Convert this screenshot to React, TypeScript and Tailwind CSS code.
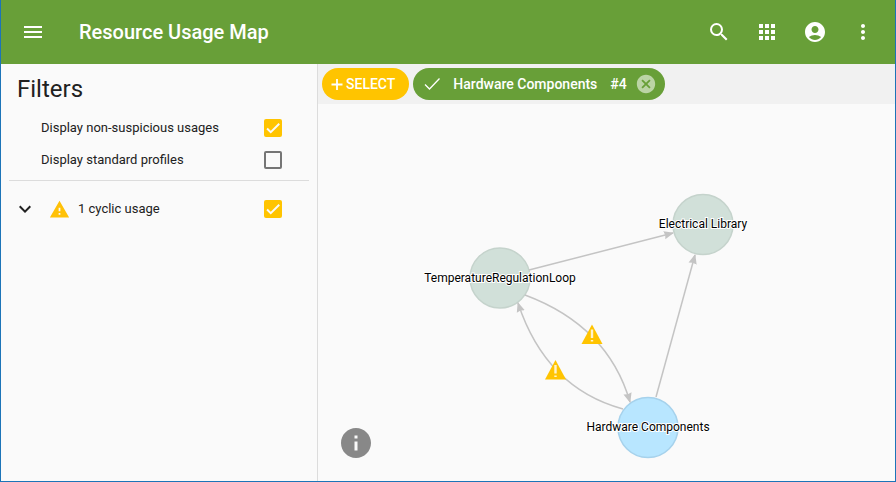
import { useState } from "react";
import {
  MdAccountCircle,
  MdApps,
  MdCancel,
  MdExpandMore,
  MdInfo,
  MdMenu,
  MdMoreVert,
  MdSearch,
  MdWarning,
} from "react-icons/md";

type GraphNode = {
  label: string;
  x: number;
  y: number;
  fill: string;
  stroke: string;
};

const nodes: GraphNode[] = [
  { label: "TemperatureRegulationLoop", x: 182, y: 174, fill: "#d1e0d9", stroke: "#c5d3cc" },
  { label: "Electrical Library", x: 385, y: 120.5, fill: "#d1e0d9", stroke: "#c5d3cc" },
  { label: "Hardware Components", x: 330, y: 323.5, fill: "#b8e6ff", stroke: "#a6d2ec" },
];

const edges = [
  "M211 166 L355 129",
  "M338 293 L377 151",
  "M207 191 Q290 222 312 298",
  "M305 305 Q228 284 200 199",
];

const warnings = [
  { x: 274, y: 231 },
  { x: 237.5, y: 266.5 },
];

function Checkbox({ id, defaultChecked = false }: { id: string; defaultChecked?: boolean }) {
  const [checked, setChecked] = useState(defaultChecked);

  return (
    <span className="grid size-[18px] shrink-0">
      <input
        id={id}
        type="checkbox"
        checked={checked}
        onChange={(e) => setChecked(e.target.checked)}
        className="col-start-1 row-start-1 size-[18px] appearance-none rounded-xs border-2 border-[#757575] checked:border-[#ffc400] checked:bg-[#ffc400]"
      />
      {checked && (
        <svg
          viewBox="0 0 24 24"
          className="pointer-events-none col-start-1 row-start-1 size-[18px]"
          fill="none"
          stroke="#fafafa"
          strokeWidth="2.6"
        >
          <path d="M4.1 12.7 9 17.6 20.3 6.3" />
        </svg>
      )}
    </span>
  );
}

function Header() {
  return (
    <header className="flex h-16 items-center bg-[#689f38] px-5 text-white">
      <button type="button" aria-label="Menu">
        <MdMenu size={24} />
      </button>
      <h1 className="ml-[34px] flex-1 text-xl font-medium">Resource Usage Map</h1>
      <div className="flex items-center gap-6">
        <button type="button" aria-label="Search">
          <MdSearch size={24} />
        </button>
        <button type="button" aria-label="Apps">
          <MdApps size={24} />
        </button>
        <button type="button" aria-label="Account">
          <MdAccountCircle size={24} />
        </button>
        <button type="button" aria-label="More">
          <MdMoreVert size={24} />
        </button>
      </div>
    </header>
  );
}

function Filters() {
  return (
    <aside className="w-[317px] shrink-0 border-r border-[#dcdcdc] px-2 text-[13px] text-[#212121]">
      <h2 className="ml-2 pt-2 text-2xl leading-[34px]">Filters</h2>
      <div className="mt-[6px] pr-[27px] pl-8">
        <div className="flex h-8 items-center justify-between">
          <label htmlFor="non-suspicious">Display non-suspicious usages</label>
          <Checkbox id="non-suspicious" defaultChecked />
        </div>
        <div className="flex h-8 items-center justify-between">
          <label htmlFor="standard">Display standard profiles</label>
          <Checkbox id="standard" />
        </div>
      </div>
      <hr className="mt-1 border-[#dcdcdc]" />
      <div className="mt-3 flex h-8 items-center pr-[27px] pl-1">
        <button type="button" aria-label="Expand cyclic usage">
          <MdExpandMore size={24} />
        </button>
        <MdWarning size={21} className="ml-3 text-[#ffc107]" />
        <label htmlFor="cyclic" className="ml-2 flex-1">
          1 cyclic usage
        </label>
        <Checkbox id="cyclic" defaultChecked />
      </div>
    </aside>
  );
}

function Toolbar() {
  return (
    <div className="flex h-10 items-center gap-1 bg-[#f1f1f1] px-1 text-sm font-medium text-white">
      <button type="button" className="flex h-8 items-center gap-[3px] rounded-full bg-[#ffc400] pr-[14px] pl-[9px]">
        <svg viewBox="0 0 12 12" className="size-3" stroke="currentColor" strokeWidth="1.8">
          <path d="M0.5 6.5 H11.5 M6 1 V12" />
        </svg>
        SELECT
      </button>
      <div className="flex h-8 items-center rounded-full bg-[#689f38] pr-2 pl-[10px]">
        <svg viewBox="0 0 18 18" className="size-[18px]" fill="none" stroke="#fff" strokeWidth="1.3">
          <path d="M2 9.5 6.5 14 16.5 3.5" />
        </svg>
        <span className="ml-3">Hardware Components</span>
        <span className="ml-[13px]">#4</span>
        <button type="button" aria-label="Remove" className="ml-2 text-white/55">
          <MdCancel size={22} />
        </button>
      </div>
    </div>
  );
}

function UsageGraph() {
  return (
    <svg className="absolute inset-0 size-full">
      <defs>
        <marker
          id="arrow"
          viewBox="0 0 10 10"
          refX="9"
          refY="5"
          markerWidth="10"
          markerHeight="10"
          markerUnits="userSpaceOnUse"
          orient="auto"
        >
          <path d="M0 0.8 L10 5 L0 9.2 L1 5 Z" fill="#c4c4c4" />
        </marker>
      </defs>
      {nodes.map((n) => (
        <circle key={n.label} cx={n.x} cy={n.y} r={30} fill={n.fill} stroke={n.stroke} strokeWidth="1.5" />
      ))}
      {edges.map((d) => (
        <path key={d} d={d} fill="none" stroke="#c4c4c4" strokeWidth="1.5" markerEnd="url(#arrow)" />
      ))}
      {warnings.map((w) => (
        <g key={w.x} transform={`translate(${w.x} ${w.y})`}>
          <path d="M0 -10.5 L10.5 9 H-10.5 Z" fill="#ffc400" />
          <path d="M-1.2 -5.5 H1.2 V3 H-1.2 Z M-1.2 5 H1.2 V6.6 H-1.2 Z" fill="#fff3cd" />
        </g>
      ))}
      {nodes.map((n) => (
        <text
          key={n.label}
          x={n.x}
          y={Math.floor(n.y) + 4}
          textAnchor="middle"
          stroke="#fff"
          strokeWidth="2"
          paintOrder="stroke"
          className="fill-black text-xs"
        >
          {n.label}
        </text>
      ))}
    </svg>
  );
}

export default function App() {
  return (
    <div className="flex min-h-screen flex-col border-x border-b border-[#1c74b8] bg-[#fafafa] font-[Roboto,sans-serif]">
      <Header />
      <div className="flex flex-1">
        <Filters />
        <main className="flex min-w-0 flex-1 flex-col">
          <Toolbar />
          <div className="relative flex-1">
            <UsageGraph />
            <button type="button" aria-label="Information" className="absolute bottom-5 left-5 text-[#888888]">
              <MdInfo size={36} />
            </button>
          </div>
        </main>
      </div>
    </div>
  );
}
